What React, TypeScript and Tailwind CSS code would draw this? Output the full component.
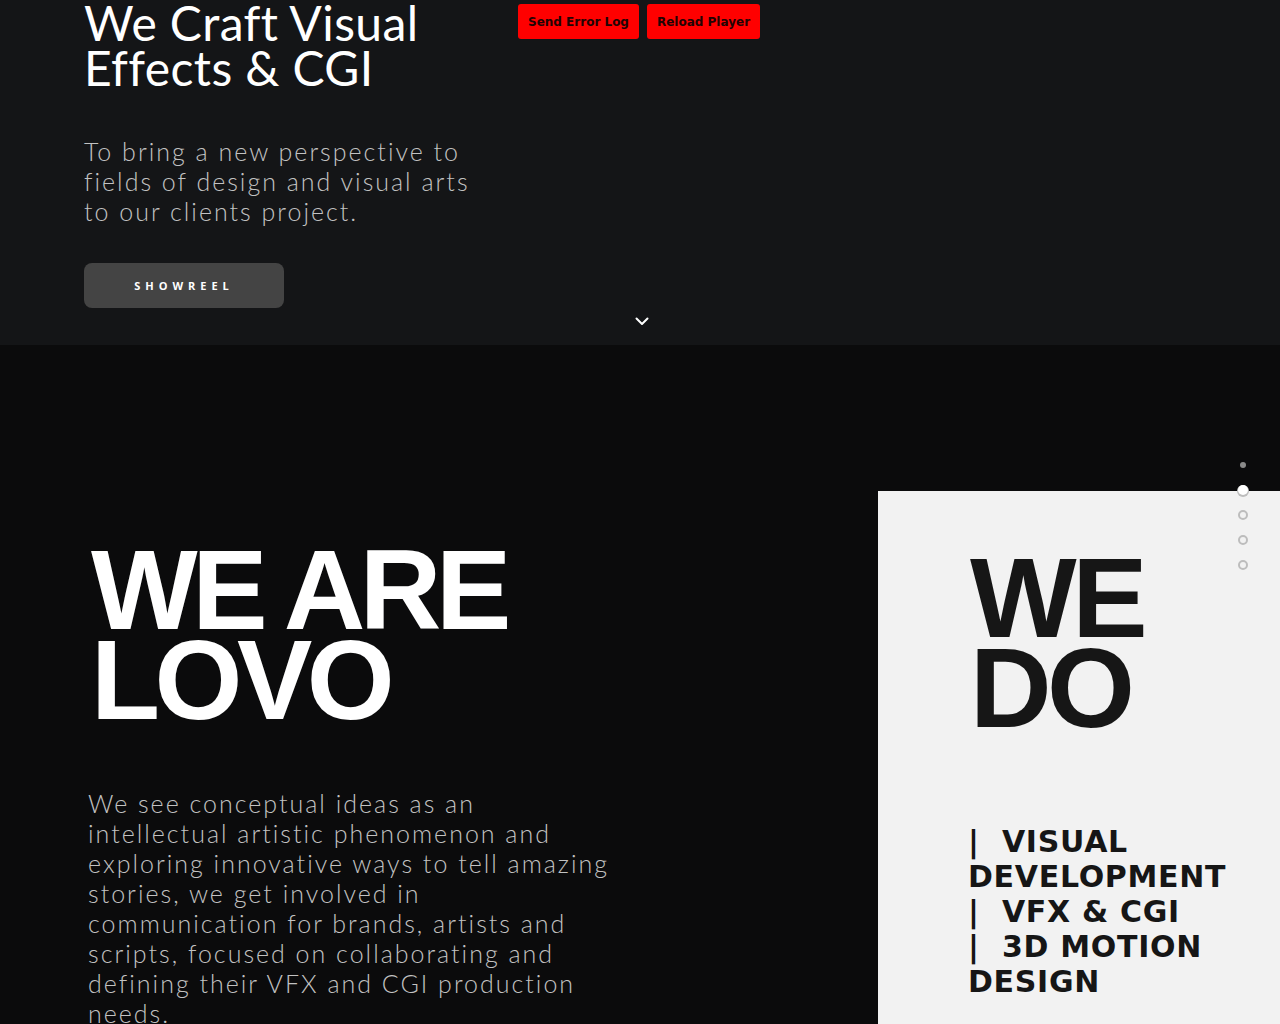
import React from 'react'

const services = ['VISUAL DEVELOPMENT', 'VFX & CGI', '3D MOTION DESIGN']

function NavDots() {
  return (
    <div className="absolute right-[32px] top-[452px] flex flex-col">
      <span className="h-[25px] w-[10px] flex items-center justify-center">
        <span className="w-[6px] h-[6px] rounded-full bg-[#8a8a8a]" />
      </span>
      <span className="h-[25px] w-[10px] flex items-center justify-center">
        <span className="w-[10px] h-[10px] rounded-full bg-white shadow-[0_1px_0_1px_#bdbdbd]" />
      </span>
      <span className="h-[25px] w-[10px] flex items-center justify-center">
        <span className="w-[10px] h-[10px] rounded-full border-2 border-[#bdbdbd]" />
      </span>
      <span className="h-[25px] w-[10px] flex items-center justify-center">
        <span className="w-[10px] h-[10px] rounded-full border-2 border-[#bdbdbd]" />
      </span>
      <span className="h-[25px] w-[10px] flex items-center justify-center">
        <span className="w-[10px] h-[10px] rounded-full border-2 border-[#bdbdbd]" />
      </span>
    </div>
  )
}

export default function App() {
  return (
    <div className="relative w-[1280px] h-[1024px] overflow-hidden bg-[#0b0b0c]" style={{ fontFamily: 'Lato, "Noto Sans", sans-serif' }}>
      {/* Hero */}
      <section className="relative h-[345px] bg-[#141517] pl-[84px] flex flex-col">
        <h1 className="text-[48px] leading-[45px] text-white font-normal tracking-[0.4px]">
          We Craft Visual
          <br />
          Effects &amp; CGI
        </h1>
        <p className="mt-[46px] text-[25px] leading-[30px] font-light text-[#c2c2c2] tracking-[2px]">
          To bring a new perspective to
          <br />
          fields of design and visual arts
          <br />
          to our clients project.
        </p>
        <button className="mt-[37px] w-[200px] h-[45px] rounded-[8px] bg-[#444444] text-white text-[11px] font-bold tracking-[5px] pt-[1px]" style={{ fontFamily: '"Open Sans", sans-serif' }}>
          SHOWREEL
        </button>
        <div className="absolute left-0 right-0 bottom-[19px] flex justify-center">
          <svg width="14" height="9" viewBox="0 0 14 9" fill="none" stroke="white" strokeWidth="2" strokeLinecap="round" strokeLinejoin="round" className="ml-[4px]">
            <path d="M1.5 1.5 7 7l5.5-5.5" />
          </svg>
        </div>

        {/* player controls */}
        <div className="absolute left-[518px] top-[4px] flex gap-[8px]" style={{ fontFamily: '"DejaVu Sans", sans-serif' }}>
          <button className="h-[35px] w-[121px] rounded-[3px] bg-[#ff0000] text-[#200404] text-[12px] font-bold">Send Error Log</button>
          <button className="h-[35px] w-[113px] rounded-[3px] bg-[#ff0000] text-[#200404] text-[12px] font-bold">Reload Player</button>
        </div>
      </section>

      {/* About */}
      <section className="flex">
        <div className="pl-[88px] pt-[200px]">
          <h2 className="ml-[3px] text-[113px] leading-[90px] font-bold text-white tracking-[-5.5px]" style={{ fontFamily: '"Liberation Sans", Arial, sans-serif' }}>
            WE ARE
            <br />
            LOVO
          </h2>
          <p className="mt-[63px] text-[25px] leading-[30px] font-light text-[#c2c2c2] tracking-[2px]">
            We see conceptual ideas as an
            <br />
            intellectual artistic phenomenon and
            <br />
            exploring innovative ways to tell amazing
            <br />
            stories, we get involved in
            <br />
            communication for brands, artists and
            <br />
            scripts, focused on collaborating and
            <br />
            defining their VFX and CGI production
            <br />
            needs.
          </p>
        </div>

        <div className="ml-auto mt-[146px] w-[402px] h-[600px] bg-[#f2f2f2] pt-[62px] pl-[92px]">
          <h2 className="text-[113px] leading-[90px] font-bold text-[#161616] tracking-[-4.5px]" style={{ fontFamily: '"Liberation Sans", Arial, sans-serif' }}>
            WE
            <br />
            DO
          </h2>
          <ul className="mt-[91px] -ml-[2px] text-[30px] leading-[35px] font-bold text-[#161616] tracking-[0.7px]" style={{ fontFamily: '"DejaVu Sans", sans-serif' }}>
            {services.map((s) => (
              <li key={s}>|&nbsp; {s}</li>
            ))}
          </ul>
        </div>
      </section>

      <NavDots />
    </div>
  )
}
